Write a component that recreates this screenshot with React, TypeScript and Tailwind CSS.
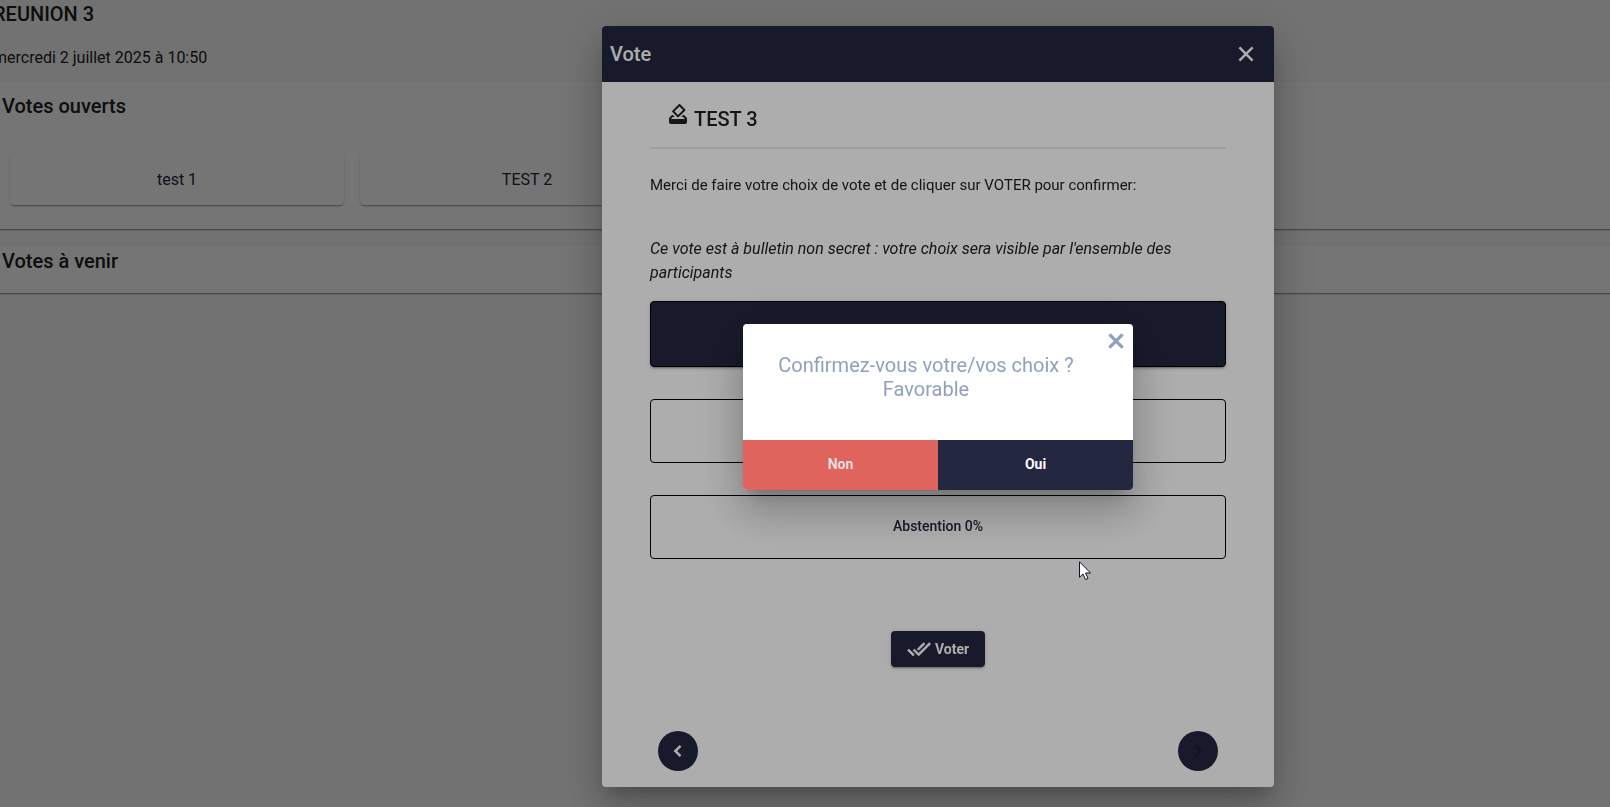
import { MdHowToVote } from "react-icons/md";

const votes = ["test 1", "TEST 2"];

const CloseIcon = ({ strokeWidth }: { strokeWidth: number }) => (
  <svg
    className="size-6"
    viewBox="0 0 24 24"
    fill="none"
    stroke="currentColor"
    strokeWidth={strokeWidth}
    aria-hidden="true"
  >
    <path d="M5.4 5.4l13.2 13.2M18.6 5.4L5.4 18.6" />
  </svg>
);

const ChevronIcon = ({ d }: { d: string }) => (
  <svg
    className="size-6"
    viewBox="0 0 24 24"
    fill="none"
    stroke="currentColor"
    strokeWidth={2.5}
    aria-hidden="true"
  >
    <path d={d} />
  </svg>
);

const DoneAllIcon = () => (
  <svg
    className="size-6"
    viewBox="0 0 24 24"
    fill="currentColor"
    stroke="currentColor"
    strokeWidth={0.6}
    aria-hidden="true"
  >
    <path d="M18 7l-1.41-1.41-6.34 6.34 1.41 1.41L18 7zM22.24 5.59L11.66 16.17 7.48 12l-1.41 1.41L11.66 19l12-12-1.42-1.41zM.41 13.41L6 19l1.41-1.41L1.83 12 .41 13.41z" />
  </svg>
);

const Meeting = () => {
  return (
    <main className="min-h-screen overflow-hidden bg-[#fafafa] text-[#212121]">
      <header className="-ml-[7px] h-[82px]">
        <h1 className="text-xl font-medium">REUNION 3</h1>
        <p className="mt-[18px] text-base">mercredi 2 juillet 2025 à 10:50</p>
      </header>
      <section className="-mx-2 h-[147px] bg-white px-[10px] pt-[10px] shadow-[0_2px_1px_-1px_rgba(0,0,0,0.2),0_1px_1px_0_rgba(0,0,0,0.14),0_1px_3px_0_rgba(0,0,0,0.12)]">
        <h2 className="text-xl font-medium">Votes ouverts</h2>
        <div className="mt-[34px] flex gap-4 px-2">
          {votes.map((vote) => (
            <button
              key={vote}
              type="button"
              className="h-[51px] w-[334px] rounded bg-white text-base text-[#242740] shadow-[0_2px_1px_-1px_rgba(0,0,0,0.2),0_1px_1px_0_rgba(0,0,0,0.14),0_1px_3px_0_rgba(0,0,0,0.12)]"
            >
              {vote}
            </button>
          ))}
        </div>
      </section>
      <section className="-mx-2 mt-4 h-12 bg-white px-[10px] pt-[2px] shadow-[0_2px_1px_-1px_rgba(0,0,0,0.2),0_1px_1px_0_rgba(0,0,0,0.14),0_1px_3px_0_rgba(0,0,0,0.12)]">
        <h2 className="text-xl font-medium">Votes à venir</h2>
      </section>
    </main>
  );
};

const VoteDialog = () => {
  return (
    <div className="fixed inset-0 flex items-center justify-center bg-black/32 pt-[6px] pl-[266px]">
      <div
        role="dialog"
        aria-label="Vote"
        className="w-full max-w-2xl rounded bg-white text-[#212121] shadow-[0_11px_15px_-7px_rgba(0,0,0,0.2),0_24px_38px_3px_rgba(0,0,0,0.14),0_9px_46px_8px_rgba(0,0,0,0.12)]"
      >
        <div className="flex h-14 items-center justify-between rounded-t bg-[#242740] pr-4 pl-2 text-white">
          <h2 className="text-xl font-medium">Vote</h2>
          <button type="button" aria-label="Fermer">
            <CloseIcon strokeWidth={2.5} />
          </button>
        </div>
        <div className="px-12 pt-5 pb-4">
          <div className="flex items-start gap-1 border-b-2 border-[#e7e7e7] pb-[14px] pl-4">
            <MdHowToVote className="size-6" />
            <h3 className="pt-[3px] text-xl font-medium">TEST 3</h3>
          </div>
          <p className="mt-6 text-[15px] leading-6">
            Merci de faire votre choix de vote et de cliquer sur VOTER pour
            confirmer:
          </p>
          <p className="mt-10 text-base italic">
            Ce vote est à bulletin non secret : votre choix sera visible par
            l'ensemble des participants
          </p>
          <div className="mt-4 flex flex-col gap-8 text-sm font-medium">
            <button
              type="button"
              aria-label="Favorable"
              className="h-[66px] rounded border border-black bg-[#242740] shadow-[0_3px_1px_-2px_rgba(0,0,0,0.2),0_2px_2px_0_rgba(0,0,0,0.14),0_1px_5px_0_rgba(0,0,0,0.12)]"
            />
            <button
              type="button"
              aria-label="Défavorable"
              className="h-16 rounded border border-black"
            />
            <button
              type="button"
              className="h-16 rounded border border-black pb-[2px] text-[#242740]"
            >
              Abstention 0%
            </button>
          </div>
          <div className="mt-18 flex justify-center">
            <button
              type="button"
              className="flex h-9 items-center gap-1 rounded bg-[#242740] px-4 text-sm font-bold text-white shadow-[0_3px_1px_-2px_rgba(0,0,0,0.2),0_2px_2px_0_rgba(0,0,0,0.14),0_1px_5px_0_rgba(0,0,0,0.12)]"
            >
              <DoneAllIcon />
              Voter
            </button>
          </div>
          <div className="mt-16 flex justify-between px-2">
            <button
              type="button"
              aria-label="Vote précédent"
              className="flex size-10 items-center justify-center rounded-full bg-[#242740] text-white"
            >
              <ChevronIcon d="M14.5 6.8L9.3 12l5.2 5.2" />
            </button>
            <button
              type="button"
              aria-label="Vote suivant"
              disabled
              className="flex size-10 items-center justify-center rounded-full bg-[#242740] text-[#1b1d30]"
            >
              <ChevronIcon d="M9.5 6.8l5.2 5.2-5.2 5.2" />
            </button>
          </div>
        </div>
      </div>
    </div>
  );
};

const ConfirmDialog = () => {
  return (
    <div className="fixed inset-0 flex items-center justify-center bg-black/32 pt-[6px] pl-[266px]">
      <div
        role="alertdialog"
        aria-label="Confirmation"
        className="w-full max-w-[390px] overflow-hidden rounded bg-white shadow-[0_11px_15px_-7px_rgba(0,0,0,0.2),0_24px_38px_3px_rgba(0,0,0,0.14),0_9px_46px_8px_rgba(0,0,0,0.12)]"
      >
        <div className="flex items-start px-[5px] pt-[5px] text-[#92a0bd]">
          <p className="flex-1 pt-6 pb-[39px] text-center text-xl leading-6">
            Confirmez-vous votre/vos choix ?
            <br />
            Favorable
          </p>
          <button type="button" aria-label="Fermer">
            <CloseIcon strokeWidth={3.3} />
          </button>
        </div>
        <div className="grid h-[50px] grid-cols-2 text-sm font-bold">
          <button type="button" className="bg-[#df645d] pb-px text-[#e2dfe0]">
            Non
          </button>
          <button type="button" className="bg-[#242740] pb-px text-white">
            Oui
          </button>
        </div>
      </div>
    </div>
  );
};

const Pointer = () => {
  return (
    <svg
      className="pointer-events-none fixed top-[561px] left-[1079px]"
      width="13"
      height="20"
      viewBox="0 0 13 20"
      aria-hidden="true"
    >
      <path
        d="M0.5 0.8V16.3L4 13L6.5 18.6L9 17.5L6.6 12H11.6Z"
        fill="white"
        stroke="#11121f"
      />
    </svg>
  );
};

const App = () => {
  return (
    <div className="font-[Roboto,sans-serif]">
      <Meeting />
      <VoteDialog />
      <ConfirmDialog />
      <Pointer />
    </div>
  );
};

export default App;
